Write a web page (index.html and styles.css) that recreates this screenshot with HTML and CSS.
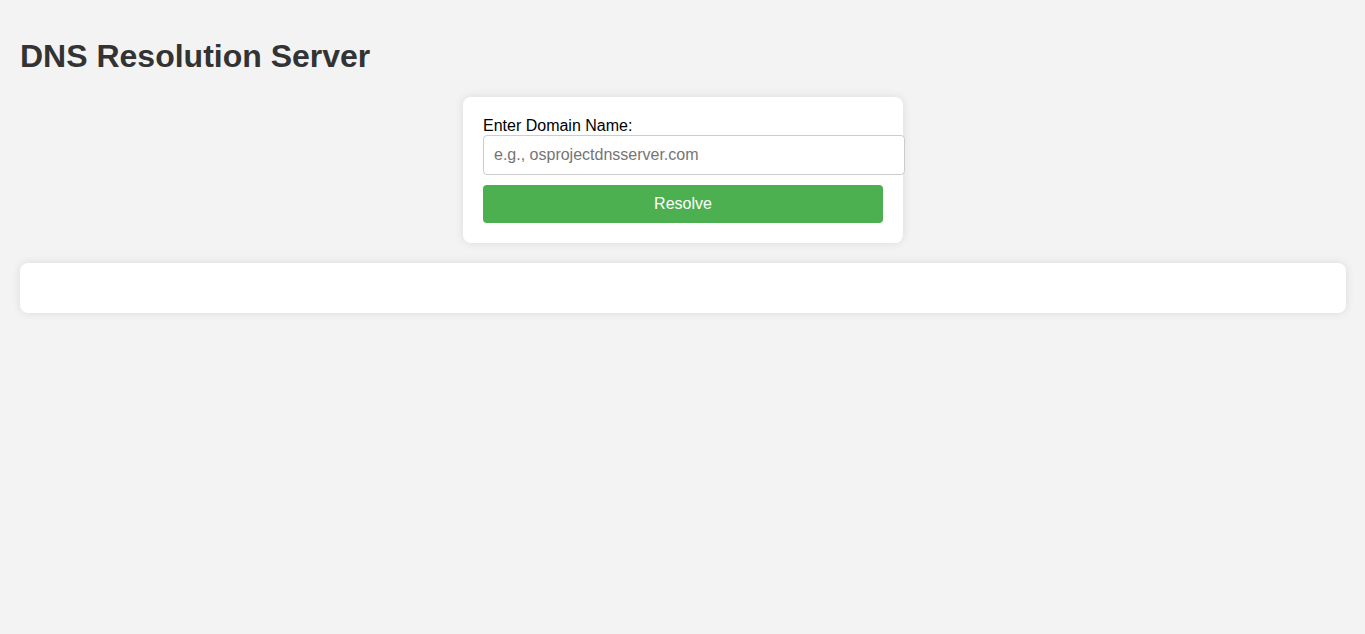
FILE: index.html
```html
<!DOCTYPE html>
<html lang="en">
  <head>
    <meta charset="UTF-8" />
    <meta name="viewport" content="width=device-width, initial-scale=1.0" />
    <title>DNS Resolution Server</title>
    <link rel="stylesheet" href="styles.css">
  </head>
  <body>
    <h1>DNS Resolution Server</h1>

    <div class="container">
      <form id="dnsForm">
        <label for="domain">Enter Domain Name:</label>
        <input
          type="text"
          id="domain"
          name="domain"
          placeholder="e.g., osprojectdnsserver.com"
          autocomplete="off"
        />
        <button type="submit">Resolve</button>
      </form>
    </div>

    <div id="result" class="result"></div>
  </body>
</html>
```

FILE: styles.css
```css
body {
  font-family: Arial, "Liberation Sans", sans-serif;
  background-color: #f3f3f3;
  margin: 0;
  padding: 20px 19px 20px 20px;
}
h1 {
  color: #333;
  font-size: 32px;
  margin: 18px 0 22px;
}
.container {
  background-color: #fff;
  width: 400px;
  margin: 0 auto;
  padding: 20px;
  border-radius: 8px;
  box-shadow: 0 0 10px rgba(0, 0, 0, 0.1);
}
label {
  display: block;
  font-size: 16px;
  color: #000;
}
input[type="text"] {
  display: block;
  width: 100%;
  padding: 10px;
  font-size: 16px;
  font-family: inherit;
  border: 1px solid #ccc;
  border-radius: 4px;
  margin: 0;
}
input::placeholder {
  color: #757575;
}
button {
  display: block;
  width: 100%;
  margin-top: 10px;
  padding: 10px;
  background-color: #4caf50;
  color: white;
  border: none;
  border-radius: 4px;
  font-size: 16px;
  font-family: inherit;
  cursor: pointer;
}
button:hover {
  background-color: #45a049;
}
.result {
  margin-top: 20px;
  min-height: 10px;
  padding: 20px;
  background-color: #fff;
  border-radius: 8px;
  box-shadow: 0 0 10px rgba(0, 0, 0, 0.1);
}
```
